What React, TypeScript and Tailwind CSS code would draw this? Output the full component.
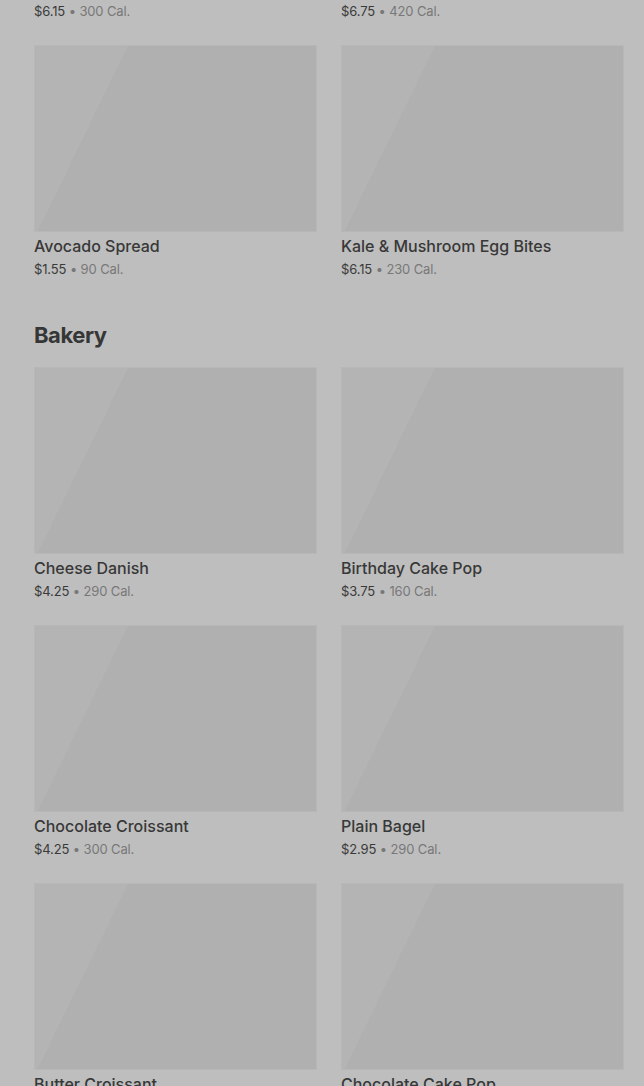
import React from "react";

type Item = { name: string; price: string; cal: string };

const breakfast: Item[] = [
  { name: "Bacon, Gouda & Egg Sandwich", price: "$6.15", cal: "300 Cal." },
  { name: "Turkey Bacon, Cheddar & Egg Whites", price: "$6.75", cal: "420 Cal." },
  { name: "Avocado Spread", price: "$1.55", cal: "90 Cal." },
  { name: "Kale & Mushroom Egg Bites", price: "$6.15", cal: "230 Cal." },
];

const bakery: Item[] = [
  { name: "Cheese Danish", price: "$4.25", cal: "290 Cal." },
  { name: "Birthday Cake Pop", price: "$3.75", cal: "160 Cal." },
  { name: "Chocolate Croissant", price: "$4.25", cal: "300 Cal." },
  { name: "Plain Bagel", price: "$2.95", cal: "290 Cal." },
  { name: "Butter Croissant", price: "$3.75", cal: "260 Cal." },
  { name: "Chocolate Cake Pop", price: "$3.75", cal: "160 Cal." },
];

function MenuCard({ item }: { item: Item }) {
  return (
    <div className="flex flex-col">
      <div className="h-[187px] w-full border border-[#b7b7b7] bg-[linear-gradient(116deg,#b4b4b4_0_25%,#b0b0b0_25%)]" />
      <div className="mt-[2px] truncate text-[16px] leading-[24px] font-medium text-[#383838]">
        {item.name}
      </div>
      <div className="mt-[1px] text-[13px] leading-[20px] tracking-[-0.01em]">
        <span className="text-[#3a3a3a]">{item.price}</span>
        <span className="text-[#787878]"> • {item.cal}</span>
      </div>
    </div>
  );
}

export default function App() {
  return (
    <div
      className="h-[1086px] overflow-hidden bg-[#bebebe] pl-[34px] pr-[20px]"
      style={{ fontFamily: "Inter, 'Noto Sans', sans-serif" }}
    >
      <section className="-mt-[213px] grid grid-cols-2 gap-x-[24px] gap-y-[24px]">
        {breakfast.map((it) => (
          <MenuCard key={it.name} item={it} />
        ))}
      </section>

      <section className="mt-[40px]">
        <h2 className="mb-[16px] text-[22px] leading-[32px] font-bold tracking-[-0.02em] text-[#363636]">
          Bakery
        </h2>
        <div className="grid grid-cols-2 gap-x-[24px] gap-y-[24px]">
          {bakery.map((it) => (
            <MenuCard key={it.name} item={it} />
          ))}
        </div>
      </section>
    </div>
  );
}
